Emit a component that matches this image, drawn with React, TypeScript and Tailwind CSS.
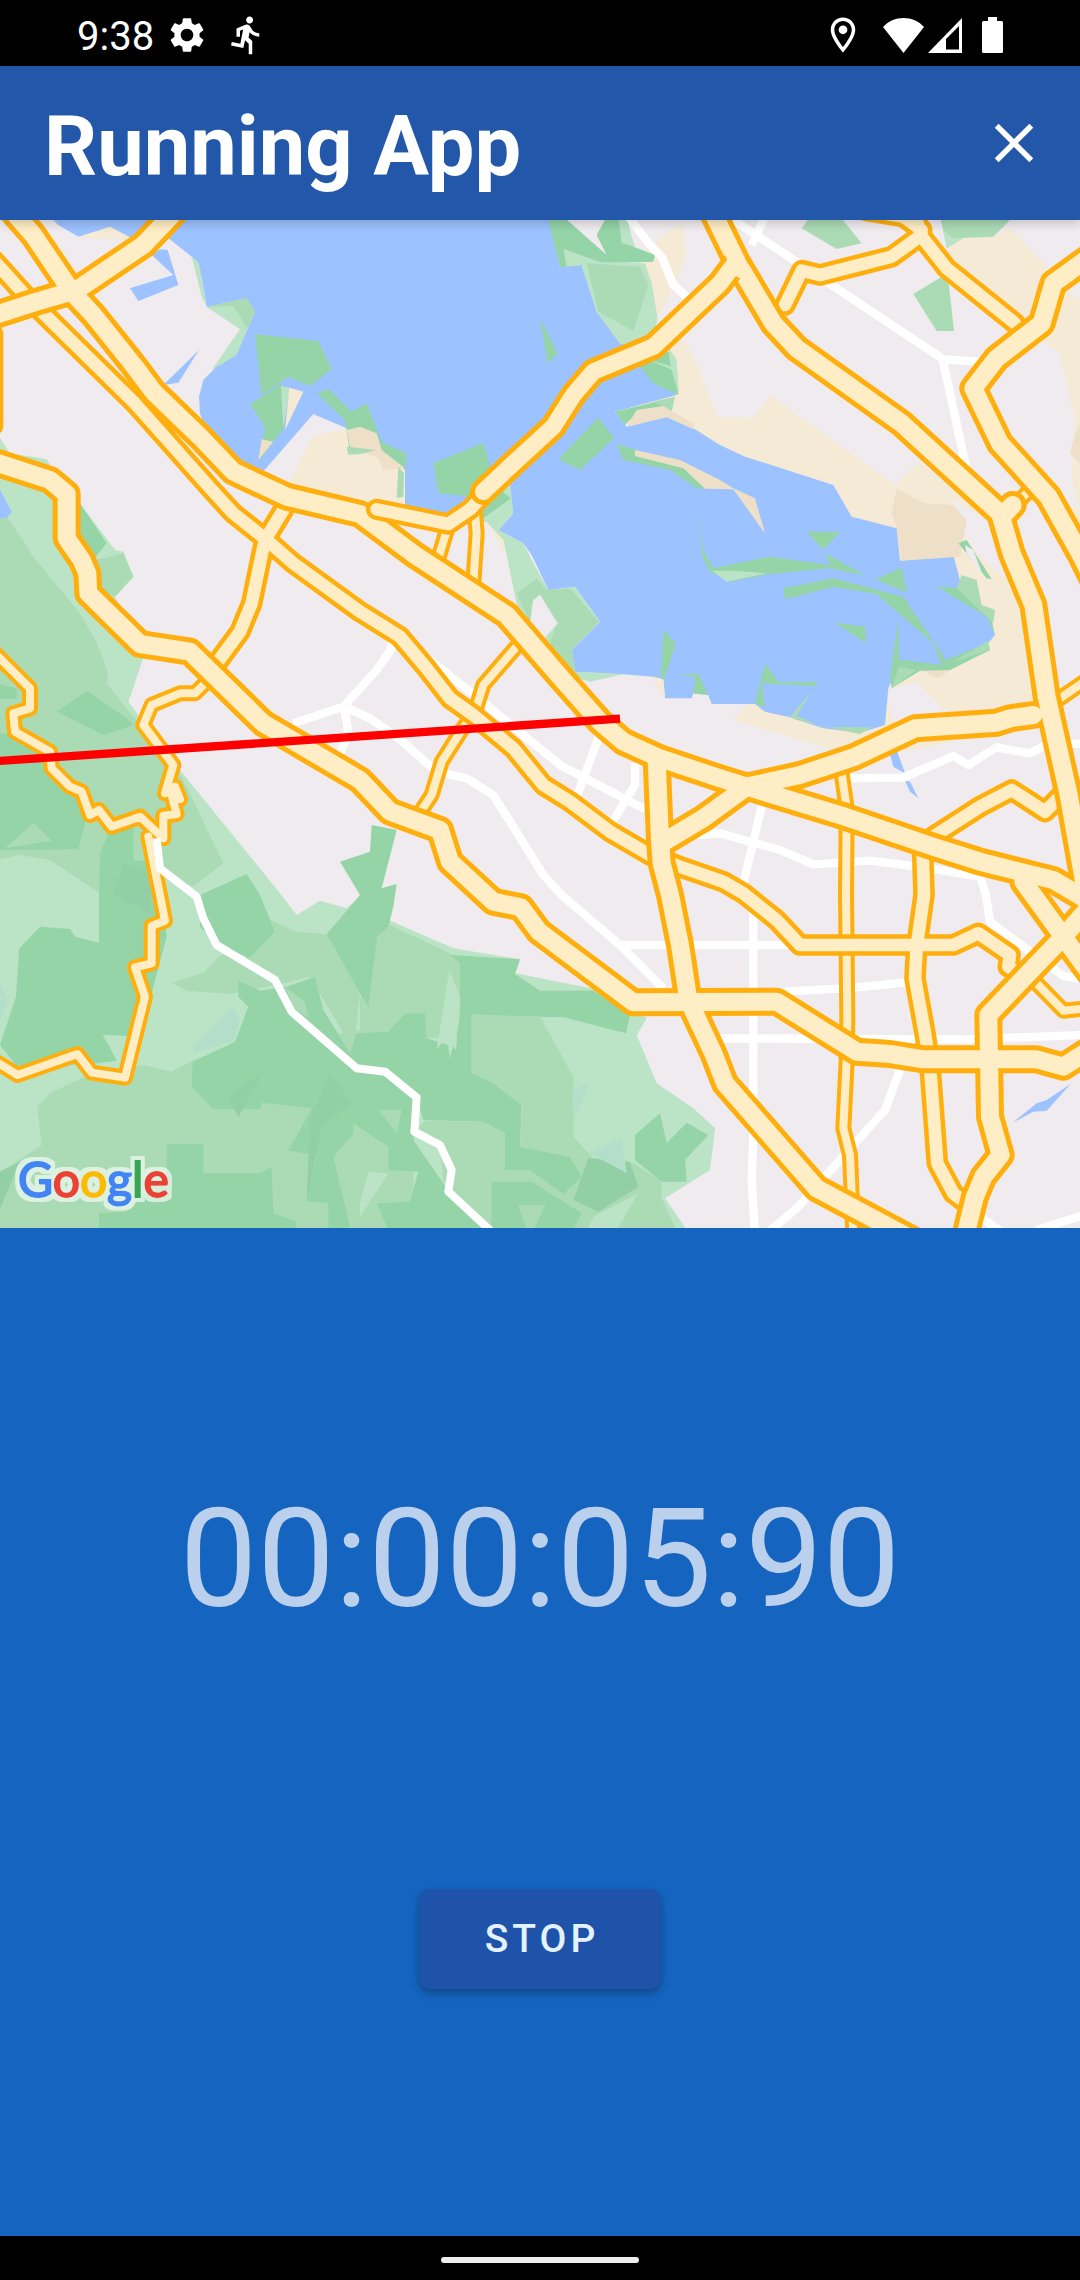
import React from "react";
import {
  MdClose,
  MdDirectionsRun,
  MdOutlineLocationOn,
  MdSettings,
} from "react-icons/md";

const LAND = "#efebee";
const WATER = "#9cc2ff";
const SAND = "#f5ead6";
const SAND_DARK = "#eddfc8";
const LIGHT = "#bbe3c6";
const MID = "#abdbb5";
const DARK = "#94d4a7";
const TEAL = "#b3dfca";
const SHADE = "#92cfa5";

type Area = [fill: string, points: string];

const areas: Area[] = [
  // sandy districts around the bay
  [SAND, "230,52 330,18 400,55 400,60"],
  [SAND, "860,805 940,645 1035,630 1080,600 1140,640 1215,740 1215,880 1080,880"],
  [SAND, "1935,85 2045,10 2060,100 2030,180 1975,290 1920,200"],
  [SAND, "2000,340 2060,370 2090,430 2150,590 2260,595 2310,525 2685,795 2760,725 3020,950 3140,1400 3120,1500 2745,1590 2500,1590 2200,1500 2285,1400 2400,1000 1900,620"],
  [SAND, "2840,85 2880,55 2980,50 3030,25 3140,140 3100,300 3040,300 2840,150"],
  [SAND, "3190,205 3250,250 3250,900 3215,780 3225,600 3180,400 3110,350"],
  [SAND_DARK, "3225,640 3250,600 3250,740 3210,700"],
  [SAND, "3190,855 3250,870 3250,1010"],
  [SAND, "595,550 625,660 600,610"],
  [LAND, "2860,840 3010,930 3060,1100 3010,1070 2960,1030 2900,960"],
  [LAND, "2655,1410 2750,1385 2840,1480 2680,1510"],

  // bay
  [WATER, "140,-20 175,15 235,50 330,20 390,52 500,50 575,110 605,170 620,260 730,330 640,450 610,480 597,530 600,580 620,640 710,735 785,760 940,582 1040,625 1145,700 1215,710 1215,870 1345,900 1430,920 1500,870 1540,880 1495,930 1570,970 1595,1005 1645,1110 1725,1100 1800,1205 1715,1290 1725,1355 1870,1363 1960,1370 1990,1380 1995,1435 2075,1435 2080,1420 2125,1425 2135,1452 2265,1452 2295,1475 2370,1492 2470,1525 2580,1538 2655,1515 2665,1405 2690,1350 2830,1345 2960,1275 2985,1245 2960,1185 2885,1100 2860,1005 2700,1022 2690,925 2555,890 2500,795 2235,710 2160,675 2080,625 2000,590 1880,620 1845,575 2030,525 1950,400 1860,370 1790,275 1745,135 1680,140 1645,-20"],
  [WATER, "455,105 480,88 503,90 535,195 415,243 390,205 520,165"],
  [WATER, "597,390 535,488 490,495"],
  [WATER, "2667,1590 2690,1590 2715,1660 2680,1640"],
  [WATER, "2715,1682 2730,1685 2755,1735 2730,1715"],
  [WATER, "3038,2708 3110,2650 3140,2640 3212,2592 3140,2672 3100,2675"],
  [SAND_DARK, "2690,805 2770,850 2860,855 2900,900 2880,1010 2705,1022 2690,925 2675,880"],
  [SAND_DARK, "2760,1350 2850,1350 2815,1375"],
  [SAND, "1960,1370 1990,1378 1995,1435 1970,1400"],

  // north-west shore
  [LIGHT, "575,108 597,130 620,260 605,230"],
  [LIGHT, "620,260 740,235 765,275 710,405 635,450 720,328"],
  [MID, "620,260 740,235 765,275 742,325 700,258"],
  [DARK, "765,343 955,362 995,447 930,498 865,470 785,525"],
  [DARK, "750,553 845,490 855,620 775,725 795,620"],
  [LIGHT, "843,498 870,503 850,625"],
  [SAND, "868,503 910,515 855,630"],
  [SAND_DARK, "785,658 820,665 775,720"],
  [DARK, "950,520 985,507 1055,575 1100,550 1145,665 1220,700 1215,750 1140,690 1050,700 1035,600"],
  [SAND_DARK, "1040,630 1080,620 1130,640 1145,690 1215,745 1150,750 1135,715 1050,680"],
  [MID, "1040,680 1130,690 1080,702 1045,704"],
  [MID, "1195,740 1212,760 1210,830 1190,835"],
  [DARK, "1300,730 1450,668 1470,740 1420,830 1315,820"],
  [DARK, "1620,295 1673,400 1643,430"],
  [DARK, "1675,718 1795,592 1842,655 1740,750"],

  // north peninsula
  [DARK, "1645,0 1690,-10 1820,105 1790,45 1820,-10 1880,-10 1900,80 1965,105 1960,125 1800,130 1745,135 1680,142"],
  [LIGHT, "1855,-10 1880,0 1905,80 1865,70"],
  [LIGHT, "1690,86 1800,126 1935,130 1955,190 1972,290 1960,380 1860,372 1790,275 1745,135 1700,140"],
  [MID, "1760,130 1920,140 1945,195 1900,332 1795,275"],
  [DARK, "1920,440 1990,390 2015,400 2035,525 1960,490"],
  [LIGHT, "2005,380 2030,420 2037,525 2015,450 1950,420 2012,438"],
  [DARK, "1845,575 2010,535 2015,575 1900,590 1875,615"],
  [MID, "1960,545 2025,530 2015,575"],
  [SAND_DARK, "1880,620 1910,570 1990,558 2080,610 2080,628 2000,592"],
  [DARK, "1850,672 1910,690 2060,750 2115,808 2085,802 2010,750 1870,720"],
  [SAND_DARK, "1905,690 2040,720 2160,780 2200,805 2265,835 2295,940 2200,808 2115,806 2050,745 1905,708"],

  // central shore
  [LIGHT, "1440,900 1530,790 1540,880 1495,930 1570,970 1600,1030 1645,1110 1725,1100 1800,1205 1715,1290 1725,1355 1870,1363 1770,1385 1680,1360 1560,1200 1520,1005 1510,960 1450,900"],
  [DARK, "1440,890 1500,810 1532,835 1450,895"],
  [SAND, "1455,900 1510,960 1515,1005"],
  [MID, "1550,1120 1610,1075 1640,1110 1710,1105 1797,1205 1715,1290 1725,1355 1700,1370 1640,1300 1670,1210 1620,1120 1595,1150 1590,1210"],
  [LAND, "1600,1140 1620,1125 1673,1210 1630,1260 1590,1210"],
  [DARK, "1990,1230 2028,1270 1992,1380 1982,1370"],
  [DARK, "2030,1362 2095,1362 2125,1425 2080,1420 2085,1370"],

  // marshes in the lagoon
  [DARK, "2085,850 2110,990 2140,1045 2160,1040 2310,1010 2490,1035 2475,1000 2600,1068 2490,1045 2310,1062 2190,1085 2130,1055 2110,1020"],
  [LIGHT, "2135,1052 2205,1052 2300,1060 2180,1085"],
  [DARK, "2420,935 2520,935 2470,990"],
  [DARK, "2350,1105 2500,1075 2710,1130 2838,1320 2960,1270 2970,1290 2850,1350 2760,1352 2675,1405 2670,1370 2695,1195 2697,1318 2825,1335 2800,1270 2630,1122 2500,1100 2355,1138"],
  [MID, "2697,1340 2750,1350 2675,1405"],
  [DARK, "2625,1078 2705,1043 2720,1118"],
  [DARK, "2505,1208 2597,1220 2597,1268"],
  [DARK, "2810,1100 2880,1105 2970,1180 2985,1245 2960,1190"],
  [MID, "2870,1105 2885,1065 2930,1080 2945,1155 2985,1170 2980,1210"],
  [MID, "2850,1330 2965,1262 2970,1290 2860,1325"],
  [DARK, "2265,1452 2295,1330 2335,1385 2455,1387 2445,1398 2285,1390 2295,1460"],
  [MID, "2435,1415 2390,1488 2470,1520 2615,1522 2580,1543 2390,1500 2370,1490"],
  [DARK, "2875,970 2960,1075 2975,1078 2900,960"],
  [LAND, "2895,975 2920,990 2950,1070 2900,1000"],

  // parks in the north-east
  [MID, "2405,25 2430,-10 2520,-10 2585,70 2510,87"],
  [LIGHT, "2820,-10 2890,-10 2890,55 2840,85"],
  [MID, "2820,-10 3040,-10 2980,50 2860,55 2830,30"],
  [MID, "2740,222 2825,170 2845,180 2862,333 2810,333"],

  // western hills
  [LIGHT, "-10,640 30,700 140,718 170,765 240,850 345,990 370,995 400,1070 345,1130 430,1310 385,1445 540,1650 840,2020 890,2085 960,2042 1040,2065 1080,2030 1165,2100 1360,2185 1560,2218 1545,2260 1800,2310 1940,2395 1910,2445 1970,2590 2080,2665 2145,2725 2130,2850 1995,2935 2060,3030 -10,3030"],
  [WATER, "-10,790 35,875 20,897 -10,900"],
  [MID, "-10,900 20,890 100,1005 240,1180 290,1265 325,1360 320,1390 400,1490 545,1670 670,1930 580,2000 430,1925 300,2020 150,1920 60,1905 -10,1920"],
  [LIGHT, "95,1005 60,940 160,940 260,1130 290,1190 430,1310 385,1445 400,1490 320,1390 325,1360 290,1265 240,1180"],
  [DARK, "240,850 320,970 270,1030 220,1000"],
  [MID, "290,1020 370,1000 400,1070 345,1130 290,1100"],
  [DARK, "170,1475 262,1412 400,1510 345,1562"],
  [DARK, "-10,1390 50,1405 50,1437 -10,1437"],
  [DARK, "-10,1540 60,1545 150,1600 240,1720 260,1790 235,1888 -10,1890"],
  [MID, "15,1885 100,1808 155,1862"],
  [MID, "150,1600 400,1515 300,1640 170,1640"],
  [DARK, "297,2030 300,1900 330,1830 400,1800 400,1922 440,1922 480,2020 500,2150 460,2300 420,2450 375,2448 310,2445 350,2522 270,2532 50,2537 0,2475 48,2330 58,2185 120,2120 210,2127 225,2150 297,2168"],
  [SHADE, "340,2025 370,1930 450,1960 450,2080"],
  [LIGHT, "308,2445 378,2448 352,2520"],
  [TEAL, "-10,2270 25,2345 -10,2420"],
  [DARK, "600,2025 740,1962 780,2025 825,2135 750,2215 655,2175 600,2120"],
  [MID, "810,2100 890,2135 980,2143 1080,2320 1060,2490 930,2270 850,2290 690,2322 560,2312 515,2288 610,2258 660,2205 750,2212 825,2135"],
  [DARK, "980,2143 1080,2025 1020,1925 1110,1895 1115,1815 1190,1830 1145,2005 1190,1992 1180,2060 1145,2200 1100,2350 1080,2320"],
  [MID, "-10,2860 50,2825 125,2775 112,2660 150,2620 250,2572 430,2535 515,2555 580,2520 1240,2400 1240,3030 -10,3030"],
  [SHADE, "-10,2860 60,2825 -10,2990"],
  [DARK, "715,2282 780,2312 860,2300 945,2270 970,2370 1050,2500 1070,2440 1165,2435 1215,2380 1280,2380 1280,2455 1360,2480 1420,2560 1480,2590 1565,2655 1560,2780 1515,2850 1515,2740 1450,2705 1270,2700 1250,2640 1240,2760 1350,2920 1480,3030 1165,3030 1130,2950 1230,2945 1255,2855 1165,2850 1165,2780 1060,2710 1060,2740 1000,2810 1050,3020 985,3030 985,2948 920,2945 950,2805 865,2792 935,2665 785,2648 780,2667 640,2667 575,2600 578,2525 705,2465 745,2360 715,2330"],
  [MID, "855,2300 915,2345 925,2395 880,2360"],
  [SHADE, "685,2630 790,2555 715,2692"],
  [SHADE, "990,2560 1055,2650 965,2720 920,2945 930,2700"],
  [TEAL, "580,2480 695,2360 720,2400 700,2462 580,2500"],
  [MID, "1135,2670 1205,2670 1190,2740"],
  [LIGHT, "1080,2950 1105,2855 1165,2860 1080,2990"],
  [DARK, "297,3030 297,2980 380,2975 500,2860 500,2772 610,2772 610,2860 780,2860 815,2840 820,2980 888,3005 888,3030"],
  [MID, "1080,2340 1130,2150 1170,2115 1350,2200 1380,2230 1380,2450 1280,2455 1275,2380 1215,2380 1165,2435 1080,2430"],
  [DARK, "1080,2320 1135,2120 1105,2360"],
  [LIGHT, "1348,2250 1380,2330 1378,2400 1350,2515 1340,2450 1310,2490"],
  [DARK, "1350,2205 1560,2218 1545,2262 1620,2312 1780,2312 1890,2385 1878,2440 1690,2392 1415,2385 1415,2560 1360,2560 1380,2380 1380,2230"],
  [MID, "1415,2383 1620,2390 1720,2570 1720,2750 1780,2815 1900,2830 1985,2885 1985,2935 2030,3030 1480,3030 1330,2880 1320,2775 1245,2735 1275,2703 1450,2705 1515,2740 1515,2850 1590,2850 1690,2920 1745,2870 1710,2810 1560,2780 1568,2655 1480,2590 1415,2560"],
  [DARK, "1560,2780 1710,2810 1745,2870 1690,2922 1590,2850 1515,2850 1515,2760"],
  [SHADE, "1720,2940 1765,2815 1890,2825 1915,2900 1795,2975"],
  [DARK, "1475,2885 1595,2885 1745,2980 1720,3030 1475,3030"],
  [MID, "1555,2955 1637,2955 1600,3030 1580,3030"],
  [LIGHT, "1915,2920 1850,3030 1760,3030 1780,2990"],
  [DARK, "1905,2745 1980,2680 2000,2770 2060,2708 2125,2745 2055,2820 2060,2885 1985,2885 1905,2820"],
  [TEAL, "1720,2610 1765,2590 1725,2700"],
  [TEAL, "1770,2800 1865,2755 1880,2860"],
];

const streets = [
  "M1870-30 1950,75 1985,110 2020,195 2060,230",
  "M2200,0 2480,185 2830,418 2940,425",
  "M2828,418 2900,750",
  "M2295-10 2255,75",
  "M2545,1675 2710,1673 2860,1608 2905,1635 2990,1582 3090,1600 3150,1570 3250,1572",
  "M2090,1845 2160,1840 2340,1890 2440,1933 2610,1922 2770,1942 2940,1970 2958,2025 2970,2105 3090,2195 3190,2268 3250,2278",
  "M2285,1760 2230,1990",
  "M2260,2050V2745L2255,2880 2265,3040",
  "M1855,2175H2400",
  "M2340,2315 2540,2305 2720,2287",
  "M2160,2455 2900,2458 3250,2445",
  "M2700,2550 2655,2670 2560,2775 2480,2865 2390,2965 2300,3040",
  "M880,1510 1030,1460 1080,1405 1130,1350 1172,1290 1175,1260",
  "M1033,1465 1045,1540 1020,1600",
  "M1033,1460 1110,1495 1190,1550 1310,1655 1400,1675 1480,1725 1630,1965 1690,2030 1860,2175 1990,2305",
  "M1220,1265 1430,1430 1680,1635 1935,1768",
  "M1797,1550 1730,1730",
  "M1905,1630V1695L1835,1810",
  "M2900,2960 3010,3040M3110,3030 3250,2985",
];

const valleyRoad =
  "M470,1855 480,1945 590,2030 610,2095 650,2175 825,2280 875,2375 1070,2545 1155,2555 1250,2632 1243,2735 1320,2775 1355,2850 1345,2915 1480,3040";

// narrow, medium and wide carriageways with their casing
const narrow = [
  "M-14,340 -14,620",
  "M1345,915 1315,1015",
  "M1425,880 1430,940 1420,1090",
  "M1545,1285 1450,1395 1425,1475 1385,1530 1325,1625 1295,1725 1255,1785",
  "M630,1375 585,1420 540,1420 455,1455 430,1515 520,1635 495,1720 525,1700 540,1738 515,1725 530,1782 490,1787 490,1855 420,1790 335,1820 297,1770 270,1785 245,1715 210,1700 155,1645 150,1595 45,1535 40,1480 90,1465 90,1405 -20,1295",
  "M445,1850 480,2025 495,2102 455,2118 455,2230 405,2242 435,2330 375,2573 275,2558 232,2502 53,2565 -20,2520",
  "M2522,1640 2540,1765 2538,2025 2542,2400 2540,2520 2530,2725 2550,2805 2560,3040",
  "M3180,1435 3260,1380",
  "M3105,2285 3190,2372 3260,2365",
  "M3050,850 3085,815",
];

const medium = [
  "M-20,120 75,225 135,285 400,545 480,635 640,815 700,880 800,960 880,1030 1080,1175 1200,1250 1280,1345 1350,1435 1420,1485 1540,1585 1630,1695 1710,1745 1830,1835 1950,1905 2040,1940 2170,1985 2230,2020 2330,2100 2400,2175 2860,2175 2935,2140 3030,2205 3025,2240 3060,2265",
  "M850,870 795,960 785,1005 755,1150 720,1235 650,1330",
  "M2600-28 2710-10 2765,30",
  "M2740-30 2765,50 2840,145 3045,310",
  "M2765,45 2675,110 2460,165 2405,152 2355,255",
  "M2800,1850 2940,1760 3035,1710 3135,1775 3195,1715",
  "M2768,1900 2772,2025 2750,2180 2745,2275 2775,2440 2790,2540 2812,2830 2860,2920 2900,2950",
];

const wide = [
  "M30-35 100,45 215,215 280,285 400,435 460,515 600,650 700,755 860,830 1080,882 1245,1005 1520,1185 1680,1370 1800,1505 1870,1565 1980,1615 2160,1675 2240,1700 2535,1790 2800,1880 2940,1925 3160,1980 3270,2045",
  "M-30,290 110,245 230,210 430,75 530-30",
  "M-20,725 150,780 200,822 200,955 245,1020 262,1060 265,1120 420,1272 570,1295 790,1510 850,1545 1080,1680 1170,1775 1320,1830 1350,1925 1480,2045 1563,2062 1617,2135 1900,2347 2330,2345 2570,2495 2670,2502 2770,2518 3110,2518 3190,2540 3260,2495",
  "M1970,1620 1980,1860 1985,1930 2010,2025 2040,2175 2065,2340 2140,2500 2175,2590 2450,2905 2740,3060",
  "M1985,1870 2110,1795 2240,1700 2400,1665 2565,1610 2745,1525 2990,1508 3030,1495 3100,1485",
  "M2130-40 2210,125 2320,310 2390,385 2705,610 3000,880 3035,1000 3100,1155 3140,1430 3205,1720 3255,2000",
  "M3270,110 3160,190 3125,310 2990,415 2920,505 3000,670 3145,830 3240,1000 3290,1100",
  "M2895,3050 2925,2930 2950,2870 3002,2805 2970,2690 2965,2385 3190,2150 3270,2060",
  "M3070,1985 3190,2150 3270,2260",
  "M3010,885 3038,855",
];

const wideOverpass = [
  "M1130,868 1345,912 1410,868 1450,825",
  "M1450,815 1540,730 1660,620 1720,525 1780,455 1960,380 2160,190 2205,130",
];

const CASING = "#ffaf0d";
const ROAD = "#ffeec5";

function Roads({ paths, outer, inner }: { paths: string[]; outer: number; inner: number }) {
  return (
    <>
      {paths.map((d) => (
        <path key={d} d={d} stroke={CASING} strokeWidth={outer} />
      ))}
      {paths.map((d) => (
        <path key={d} d={d} stroke={ROAD} strokeWidth={inner} />
      ))}
    </>
  );
}

function BayMap() {
  return (
    <svg
      viewBox="0 0 3240 3024"
      preserveAspectRatio="xMidYMid slice"
      className="absolute inset-0 h-full w-full"
      role="img"
      aria-label="Map with the running route"
    >
      <rect width="3240" height="3024" fill={LAND} />
      {areas.map(([fill, points]) => (
        <polygon key={points} points={points} fill={fill} />
      ))}
      <g fill="none" strokeLinejoin="round" strokeLinecap="round">
        {streets.map((d) => (
          <path key={d} d={d} stroke="#ffffff" strokeWidth={25} strokeLinecap="butt" />
        ))}
        <Roads paths={narrow} outer={48} inner={24} />
        <path d={valleyRoad} stroke="#ffffff" strokeWidth={24} strokeLinecap="butt" />
        <Roads paths={medium} outer={65} inner={38} />
        <Roads paths={wide} outer={84} inner={54} />
        <path d={wideOverpass[0]} stroke={CASING} strokeWidth={64} />
        <path d={wideOverpass[0]} stroke={ROAD} strokeWidth={38} />
        <path d={wideOverpass[1]} stroke={CASING} strokeWidth={80} />
        <path d={wideOverpass[1]} stroke={ROAD} strokeWidth={50} />
        <path d="M2195,90 2225,150" stroke={ROAD} strokeWidth={50} />
        <path d="M-20,1624 1860,1496" stroke="#ff0000" strokeWidth={25} strokeLinecap="butt" />
      </g>
    </svg>
  );
}

function GoogleLogo() {
  return (
    <svg
      viewBox="0 0 180 72"
      className="absolute bottom-3 left-3 h-[72px] w-[180px] overflow-visible"
      role="img"
      aria-label="Google"
    >
      <defs>
        <filter id="halo" x="-10%" y="-20%" width="120%" height="140%">
          <feMorphology in="SourceAlpha" operator="dilate" radius="4" result="grown" />
          <feFlood floodColor="#ffffff" floodOpacity="0.6" />
          <feComposite in2="grown" operator="in" result="glow" />
          <feMerge>
            <feMergeNode in="glow" />
            <feMergeNode in="SourceGraphic" />
          </feMerge>
        </filter>
      </defs>
      <text x="6" y="53" fontSize="48" fontWeight="400" fontFamily="Lato, sans-serif" strokeWidth="2" filter="url(#halo)">
        <tspan fill="#4285f4" stroke="#4285f4">G</tspan>
        <tspan fill="#ea4335" stroke="#ea4335">o</tspan>
        <tspan fill="#fbbc05" stroke="#fbbc05">o</tspan>
        <tspan fill="#4285f4" stroke="#4285f4">g</tspan>
        <tspan fill="#34a853" stroke="#34a853">l</tspan>
        <tspan fill="#ea4335" stroke="#ea4335">e</tspan>
      </text>
    </svg>
  );
}

function StatusBar() {
  return (
    <div className="flex h-[66px] shrink-0 items-center justify-between bg-black px-[77px] pt-1 text-white">
      <div className="flex items-center">
        <span className="pt-1 text-[40px] leading-none">9:38</span>
        <MdSettings className="ml-3 size-[42px]" />
        <MdDirectionsRun className="ml-[18px] size-[42px]" />
      </div>
      <div className="flex items-center">
        <MdOutlineLocationOn className="size-[42px]" />
        <svg viewBox="0 0 41 36" className="ml-[19px] h-9 w-[41px]" fill="currentColor" aria-label="Wi-Fi">
          <path d="M20.500 36 0 10C5.500 4 12.500 1 20.500 1S35.500 4 41 10Z" />
        </svg>
        <svg viewBox="0 0 34 36" className="ml-1 h-9 w-[34px]" fill="currentColor" aria-label="Mobile signal">
          <path fillRule="evenodd" d="M34 1V36H0ZM31 9 18 22V32.500H31Z" />
        </svg>
        <svg viewBox="0 0 21 36" className="ml-5 h-9 w-[21px]" fill="currentColor" aria-label="Battery">
          <path d="M6 0H15V4H19.500Q21 4 21 5.500V34.500Q21 36 19.500 36H1.500Q0 36 0 34.500V5.500Q0 4 1.500 4H6Z" />
        </svg>
      </div>
    </div>
  );
}

export default function App() {
  return (
    <div className="flex min-h-screen flex-col bg-black font-[Roboto,sans-serif]">
      <StatusBar />
      <header className="relative z-10 flex h-[154px] shrink-0 items-center justify-between bg-[#2257a9] pr-[33px] pl-11 text-white shadow-[0_3px_10px_rgba(0,0,0,0.2)]">
        <h1 className="pt-1.5 text-[83px] leading-none font-bold">Running App</h1>
        <button type="button" aria-label="Close">
          <MdClose className="size-[66px]" />
        </button>
      </header>
      <main className="grid grow auto-rows-fr">
        <section className="relative min-h-96 overflow-hidden">
          <BayMap />
          <GoogleLogo />
        </section>
        <section className="flex min-h-96 flex-col items-center justify-evenly bg-[#1565c0]">
          <time className="text-[138px] leading-[168px] text-[#bad0ec]">00:00:05:90</time>
          <button
            type="button"
            className="h-[100px] w-[242px] rounded-[11px] bg-[#1e53a9] pl-1 text-[39px] font-medium tracking-[4px] text-[#e3f2fd] shadow-[0_4px_8px_rgba(0,0,0,0.3)]"
          >
            STOP
          </button>
        </section>
      </main>
      <nav className="flex h-11 shrink-0 items-center justify-center bg-black" aria-label="System navigation">
        <div className="mt-1 h-1.5 w-[198px] rounded-full bg-[#eeeeee]" />
      </nav>
    </div>
  );
}
